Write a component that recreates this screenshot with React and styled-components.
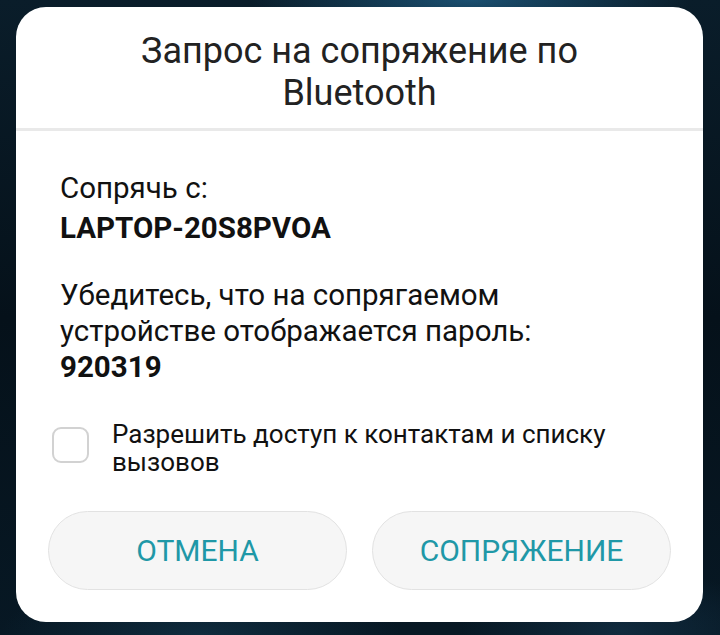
import React, { useState } from 'react'
import styled, { createGlobalStyle } from 'styled-components'

const GlobalStyle = createGlobalStyle`
  html, body {
    margin: 0;
    padding: 0;
    height: 100%;
  }
  body {
    font-family: Roboto, "Noto Sans", sans-serif;
    background: #040d14;
  }
`

function App() {
  const [allowContacts, setAllowContacts] = useState(false)

  return (
    <>
      <GlobalStyle />
      <Screen>
        <Dialog>
          <Title>Запрос на сопряжение по<br />Bluetooth</Title>
          <Body>
            <Paragraph>
              Сопрячь с:
              <Strong $spaced>LAPTOP-20S8PVOA</Strong>
            </Paragraph>
            <Paragraph>
              Убедитесь, что на сопрягаемом<br />устройстве отображается пароль:
              <Strong>920319</Strong>
            </Paragraph>
            <CheckRow onClick={() => setAllowContacts(!allowContacts)}>
              <Checkbox $checked={allowContacts} />
              <CheckLabel>Разрешить доступ к контактам и списку<br />вызовов</CheckLabel>
            </CheckRow>
          </Body>
          <Actions>
            <Button>ОТМЕНА</Button>
            <Button>СОПРЯЖЕНИЕ</Button>
          </Actions>
        </Dialog>
      </Screen>
    </>
  )
}

export default App

const Screen = styled.div`
  width: 720px;
  height: 635px;
  box-sizing: border-box;
  padding: 7px 17px 13px 16px;
  background:
    radial-gradient(ellipse 220px 40px at 470px 0px, rgba(40, 120, 170, 0.55), transparent),
    radial-gradient(ellipse 160px 60px at 620px 630px, rgba(30, 70, 100, 0.4), transparent),
    radial-gradient(ellipse 200px 60px at 200px 635px, rgba(30, 80, 110, 0.35), transparent),
    linear-gradient(180deg, #0a1d2a 0%, #05111a 50%, #071824 100%);
`

const Dialog = styled.div`
  height: 100%;
  background: #fff;
  border-radius: 30px;
  display: flex;
  flex-direction: column;
  overflow: hidden;
`

const Title = styled.div`
  padding: 23px 40px 14px;
  font-size: 36px;
  line-height: 42px;
  color: #222;
  text-align: center;
  border-bottom: 3px solid #e9e9e9;
`

const Body = styled.div`
  padding: 39px 44px 0;
  display: flex;
  flex-direction: column;
  gap: 31px;
  flex: 1;
`

const Paragraph = styled.div`
  font-size: 29.5px;
  line-height: 36px;
  color: #111;
`

const Strong = styled.div`
  font-weight: 700;
  margin-top: ${p => (p.$spaced ? '4px' : '0')};
`

const CheckRow = styled.div`
  display: flex;
  align-items: flex-start;
  gap: 23px;
  margin: 4px 0 0 -8px;
  cursor: pointer;
`

const Checkbox = styled.div`
  flex: none;
  margin-top: 7px;
  width: 37px;
  height: 36px;
  box-sizing: border-box;
  border: 2px solid ${p => (p.$checked ? '#1d9aa7' : '#d2d2d2')};
  background: ${p => (p.$checked ? '#1d9aa7' : '#fff')};
  border-radius: 9px;
`

const CheckLabel = styled.div`
  font-size: 26px;
  line-height: 28px;
  color: #111;
`

const Actions = styled.div`
  display: grid;
  grid-template-columns: 1fr 1fr;
  gap: 25px;
  padding: 0 32px 32px;
`

const Button = styled.button`
  height: 79px;
  border-radius: 40px;
  border: 1.5px solid #e2e2e2;
  background: #f6f6f6;
  color: #1f98a7;
  font-family: Roboto, sans-serif;
  font-size: 30px;
  cursor: pointer;
`
